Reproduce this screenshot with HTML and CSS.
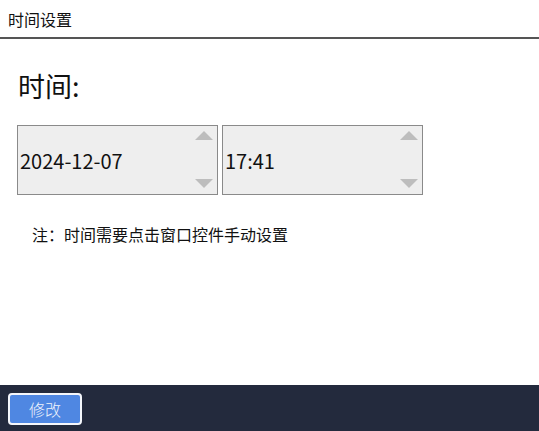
FILE: index.html
```html
<!DOCTYPE html>
<html lang="zh">
<head>
<meta charset="utf-8">
<link rel="stylesheet" href="styles.css">
</head>
<body>
<div class="page">
  <header class="titlebar">时间设置</header>
  <main class="content">
    <h1 class="label">时间:</h1>
    <div class="fields">
      <div class="spin">
        <span class="value">2024-12-07</span>
        <div class="arrows">
          <span class="tri up"></span>
          <span class="tri down"></span>
        </div>
      </div>
      <div class="spin">
        <span class="value">17:41</span>
        <div class="arrows">
          <span class="tri up"></span>
          <span class="tri down"></span>
        </div>
      </div>
    </div>
    <p class="note">注：时间需要点击窗口控件手动设置</p>
  </main>
  <footer class="footer">
    <button class="btn">修改</button>
  </footer>
</div>
</body>
</html>
```

FILE: styles.css
```css
* { box-sizing: border-box; }
html, body { margin: 0; padding: 0; }
body {
  font-family: "Noto Sans CJK SC", "Noto Sans", sans-serif;
  color: #111;
  background: #fff;
}
.page {
  display: flex;
  flex-direction: column;
  height: 431px;
}
.titlebar {
  height: 39px;
  border-bottom: 2px solid #555;
  font-size: 16px;
  line-height: 22px;
  padding: 8px 0 0 8px;
}
.content {
  flex: 1;
  padding: 0 0 0 17px;
}
.label {
  margin: 28px 0 0 1px;
  font-size: 27px;
  font-weight: normal;
  line-height: 38px;
}
.fields {
  display: flex;
  gap: 4px;
  margin-top: 20px;
}
.spin {
  width: 201px;
  height: 70px;
  border: 1px solid #8a8a8a;
  background: #eeeeee;
  display: flex;
  align-items: center;
  justify-content: space-between;
  padding: 0 4px 0 2px;
}
.value {
  font-size: 20px;
  line-height: 26px;
  padding-top: 2px;
}
.arrows {
  display: flex;
  flex-direction: column;
  justify-content: space-between;
  height: 100%;
  padding: 5px 0 6px;
}
.tri {
  width: 0;
  height: 0;
  border-left: 9px solid transparent;
  border-right: 9px solid transparent;
}
.tri.up { border-bottom: 9px solid #bdbdbd; }
.tri.down { border-top: 9px solid #bdbdbd; }
.note {
  margin: 28px 0 0 15px;
  font-size: 16px;
  line-height: 22px;
}
.footer {
  height: 46px;
  background: #232a3d;
  padding: 8px 0 0 8px;
}
.btn {
  width: 74px;
  height: 32px;
  background: #4f87e2;
  border: 2px solid #f4f6fb;
  border-radius: 4px;
  color: #f0f4fc;
  font-family: "Noto Sans CJK SC", sans-serif;
  font-weight: 300;
  font-size: 16px;
  padding: 0;
}
```
